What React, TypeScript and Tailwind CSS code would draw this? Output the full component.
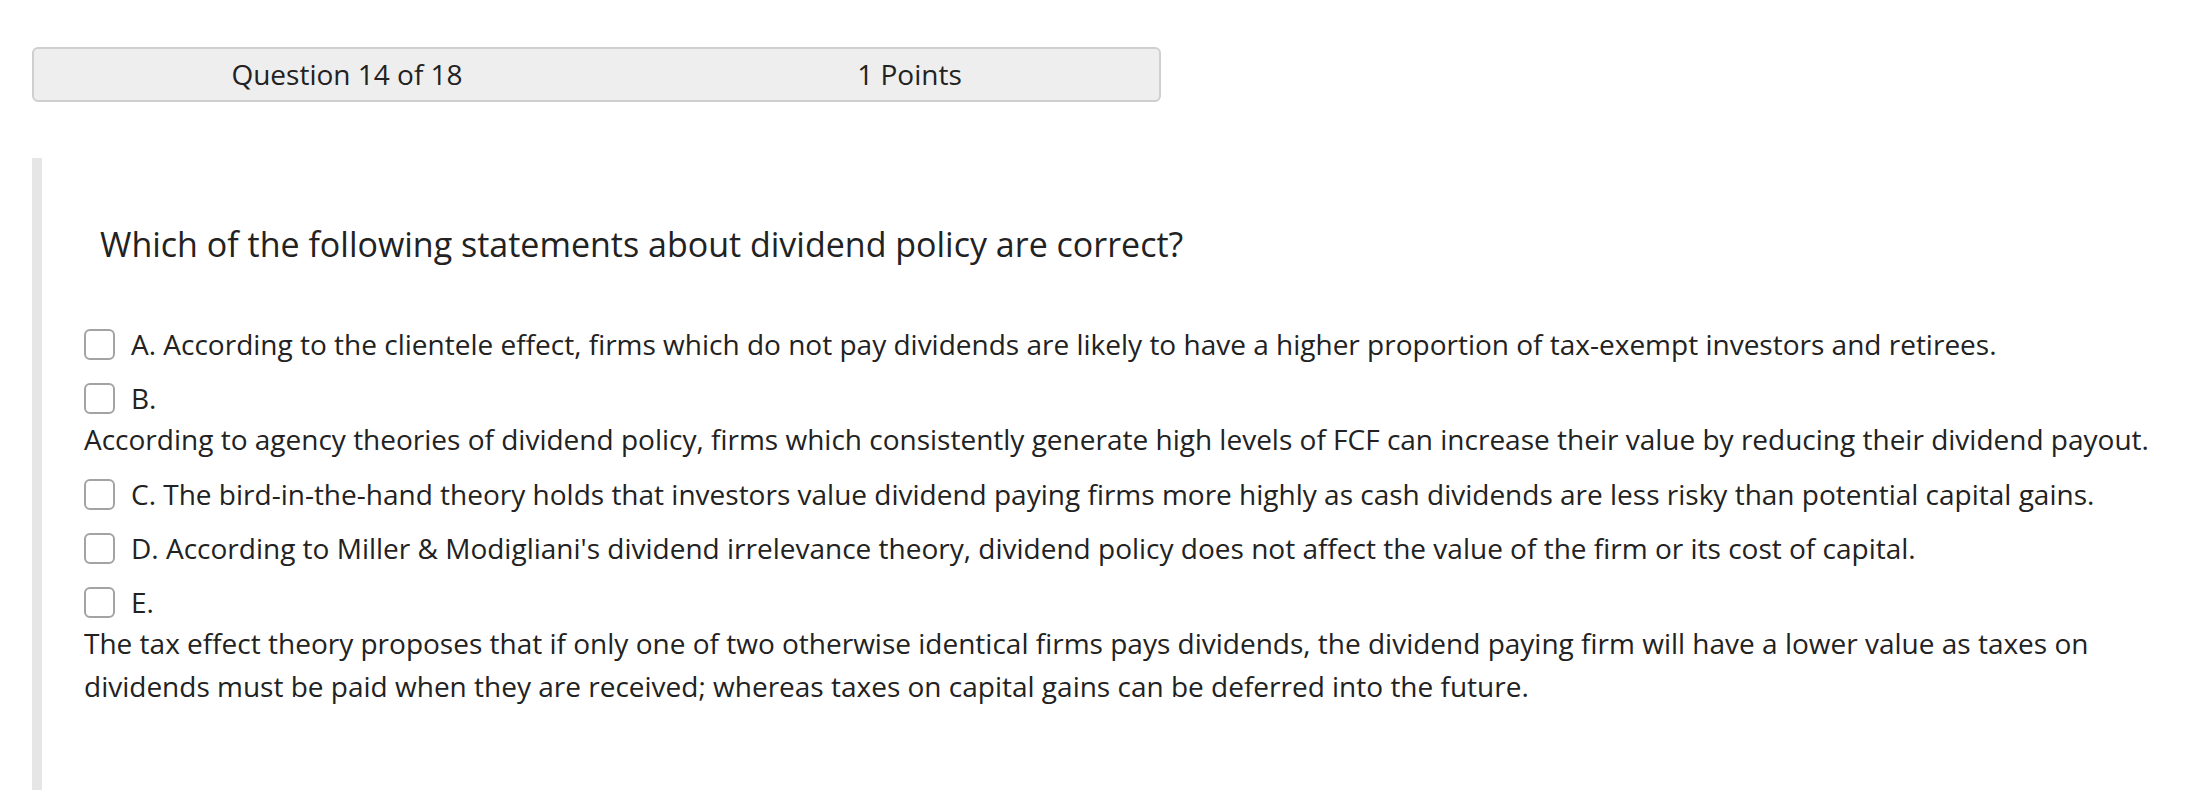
const options = [
  { label: 'A.', text: 'According to the clientele effect, firms which do not pay dividends are likely to have a higher proportion of tax-exempt investors and retirees.', inline: true },
  { label: 'B.', text: 'According to agency theories of dividend policy, firms which consistently generate high levels of FCF can increase their value by reducing their dividend payout.', inline: false },
  { label: 'C.', text: 'The bird-in-the-hand theory holds that investors value dividend paying firms more highly as cash dividends are less risky than potential capital gains.', inline: true },
  { label: 'D.', text: "According to Miller & Modigliani's dividend irrelevance theory, dividend policy does not affect the value of the firm or its cost of capital.", inline: true },
  { label: 'E.', text: 'The tax effect theory proposes that if only one of two otherwise identical firms pays dividends, the dividend paying firm will have a lower value as taxes on dividends must be paid when they are received; whereas taxes on capital gains can be deferred into the future.', inline: false },
];

function Checkbox() {
  return <span className="inline-block w-[31px] h-[31px] shrink-0 rounded-[6px] border-2 border-[#a3a3a3] bg-white" />;
}

export default function App() {
  return (
    <div className="w-[2206px] h-[790px] overflow-hidden bg-white text-[#222222] font-['Open_Sans',sans-serif]">
      <div className="pt-[47px] pl-[32px]">
        <div className="w-[1129px] h-[55px] flex items-center bg-[#eeeeee] border-2 border-[#cfcfcf] rounded-[6px] text-[28px] leading-[40px] pb-[2px]">
          <span className="w-[626px] text-center">Question 14 of 18</span>
          <span className="w-[499px] text-center">1 Points</span>
        </div>
      </div>

      <section className="mt-[56px] ml-[32px] h-[632px] border-l-[10px] border-[#e6e6e6] pt-[63px] pr-[26px]">
        <h2 className="pl-[58px] text-[34px] leading-[46px]">
          Which of the following statements about dividend policy are correct?
        </h2>

        <div className="mt-[50px] pl-[42px] text-[28px] leading-[43px]">
          {options.map((o) => (
            <div key={o.label} className="py-[5.5px]">
              <div className="flex items-center gap-[16px]">
                <Checkbox />
                <span>{o.inline ? `${o.label} ${o.text}` : o.label}</span>
              </div>
              {!o.inline && <p className="-mt-[2px] mb-[1px]">{o.text}</p>}
            </div>
          ))}
        </div>
      </section>
    </div>
  );
}
